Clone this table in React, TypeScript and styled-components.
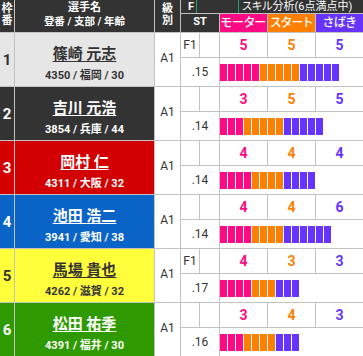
import React from 'react';
import styled, { createGlobalStyle } from 'styled-components';

interface Racer {
    waku: number;
    name: string;
    info: string;
    grade: string;
    flying: string;
    st: string;
    motor: number;
    start: number;
    sabaki: number;
}

const racers: Racer[] = [
    { waku: 1, name: '篠崎 元志', info: '4350 / 福岡 / 30', grade: 'A1', flying: 'F1', st: '.15', motor: 5, start: 5, sabaki: 5 },
    { waku: 2, name: '吉川 元浩', info: '3854 / 兵庫 / 44', grade: 'A1', flying: '', st: '.14', motor: 3, start: 5, sabaki: 5 },
    { waku: 3, name: '岡村 仁', info: '4311 / 大阪 / 32', grade: 'A1', flying: '', st: '.14', motor: 4, start: 4, sabaki: 4 },
    { waku: 4, name: '池田 浩二', info: '3941 / 愛知 / 38', grade: 'A1', flying: '', st: '.14', motor: 4, start: 4, sabaki: 6 },
    { waku: 5, name: '馬場 貴也', info: '4262 / 滋賀 / 32', grade: 'A1', flying: 'F1', st: '.17', motor: 4, start: 3, sabaki: 3 },
    { waku: 6, name: '松田 祐季', info: '4391 / 福井 / 30', grade: 'A1', flying: '', st: '.16', motor: 3, start: 4, sabaki: 3 },
];

const wakuColors: Record<number, { bg: string; fg: string }> = {
    1: { bg: '#e6e6e6', fg: '#333333' },
    2: { bg: '#333333', fg: '#ffffff' },
    3: { bg: '#d20000', fg: '#ffffff' },
    4: { bg: '#0a64c8', fg: '#ffffff' },
    5: { bg: '#ffff3c', fg: '#333333' },
    6: { bg: '#2f9a00', fg: '#ffffff' },
};

const MOTOR = '#ff0a84';
const START = '#ff8000';
const SABAKI = '#6633ff';

const GlobalStyle = createGlobalStyle`
    html, body {
        margin: 0;
        padding: 0;
        overflow: hidden;
        background: #ffffff;
    }
    body {
        font-family: Roboto, "Noto Sans CJK JP", sans-serif;
        color: #333333;
    }
`;

const Table = styled.div`
    display: grid;
    grid-template-columns: 14px 139px 25px 18px 19px 47px 47px 47px;
    grid-template-rows: 13px 18px repeat(6, 24px 28px);
    gap: 1px;
    background: #c2c2c2;
    width: 363px;
`;

const HeadCell = styled.div<{ $rows?: number; $cols?: number; $bg?: string }>`
    grid-row: span ${p => p.$rows || 1};
    grid-column: span ${p => p.$cols || 1};
    background: ${p => p.$bg || '#333333'};
    color: #ffffff;
    font-weight: bold;
    font-size: 11px;
    line-height: 12px;
    display: flex;
    flex-direction: column;
    align-items: center;
    justify-content: center;
    text-align: center;
    padding-bottom: 2px;
    box-sizing: border-box;
`;

const HeadSub = styled.span`
    margin-top: 2px;
    font-size: 10.5px;
`;

const TopBand = styled.div`
    grid-column: span 5;
    background: #333333;
    color: #ffffff;
    display: flex;
    align-items: stretch;
    padding-left: 7px;
    font-size: 11px;
    line-height: 13px;
`;

const FLabel = styled.span`
    font-weight: bold;
    font-size: 11px;
`;

const Tick = styled.span`
    width: 1px;
    background: #23a07a;
    margin-left: 2px;
`;

const TickGap = styled.span`
    width: 39px;
`;

const BandTitle = styled.span`
    margin-left: 3px;
    font-size: 11px;
    font-feature-settings: 'palt';
    white-space: nowrap;
`;

const SkillHead = styled(HeadCell)`
    font-size: 12px;
    font-weight: 500;
    font-feature-settings: 'palt';
    padding-bottom: 0;
`;

const Waku = styled.div<{ $bg: string; $fg: string }>`
    grid-row: span 2;
    background: ${p => p.$bg};
    color: ${p => p.$fg};
    font-weight: bold;
    font-size: 15px;
    display: flex;
    align-items: center;
    justify-content: center;
`;

const NameCell = styled.div<{ $bg: string; $fg: string }>`
    grid-row: span 2;
    background: ${p => p.$bg};
    color: ${p => p.$fg};
    display: flex;
    flex-direction: column;
    align-items: center;
    padding-top: 12px;
    box-sizing: border-box;
`;

const Name = styled.span`
    font-size: 15px;
    line-height: 18px;
    font-weight: bold;
    text-decoration: underline;
    text-underline-offset: 2px;
    white-space: nowrap;
`;

const Info = styled.span`
    margin-top: 6px;
    font-size: 11px;
    line-height: 14px;
    font-weight: bold;
    white-space: nowrap;
`;

const Grade = styled.div`
    grid-row: span 2;
    background: #ffffff;
    font-size: 12px;
    display: flex;
    align-items: center;
    justify-content: center;
    padding-bottom: 3px;
`;

const Cell = styled.div<{ $cols?: number }>`
    grid-column: span ${p => p.$cols || 1};
    background: #ffffff;
    font-size: 12px;
    display: flex;
    align-items: center;
    justify-content: center;
`;

const Score = styled(Cell)<{ $color: string }>`
    color: ${p => p.$color};
    font-weight: bold;
    font-size: 14px;
`;

const BarCell = styled.div`
    grid-column: span 3;
    background: #ffffff;
    display: flex;
    align-items: center;
`;

const Segment = styled.span<{ $color: string }>`
    width: 7px;
    height: 17px;
    background: ${p => p.$color};
    border-right: 1px solid #ffffff;
`;

const SkillBar: React.FC<{ motor: number; start: number; sabaki: number }> = ({ motor, start, sabaki }) => {
    const segs: string[] = [
        ...Array(motor).fill(MOTOR),
        ...Array(start).fill(START),
        ...Array(sabaki).fill(SABAKI),
    ];
    return (
        <BarCell>
            {segs.map((c, i) => (
                <Segment key={i} $color={c} />
            ))}
        </BarCell>
    );
};

const App: React.FC = () => {
    return (
        <>
            <GlobalStyle />
            <Table>
                <HeadCell $rows={2}>
                    <span>枠</span>
                    <span>番</span>
                </HeadCell>
                <HeadCell $rows={2}>
                    <span>選手名</span>
                    <HeadSub>登番 / 支部 / 年齢</HeadSub>
                </HeadCell>
                <HeadCell $rows={2}>
                    <span>級</span>
                    <span>別</span>
                </HeadCell>
                <TopBand>
                    <FLabel>F</FLabel>
                    <Tick />
                    <TickGap />
                    <Tick />
                    <BandTitle>スキル分析(6点満点中)</BandTitle>
                </TopBand>
                <HeadCell $cols={2}>ST</HeadCell>
                <SkillHead $bg={MOTOR}>モーター</SkillHead>
                <SkillHead $bg={START}>スタート</SkillHead>
                <SkillHead $bg={SABAKI}>さばき</SkillHead>

                {racers.map(r => {
                    const c = wakuColors[r.waku];
                    return (
                        <React.Fragment key={r.waku}>
                            <Waku $bg={c.bg} $fg={c.fg}>{r.waku}</Waku>
                            <NameCell $bg={c.bg} $fg={c.fg}>
                                <Name>{r.name}</Name>
                                <Info>{r.info}</Info>
                            </NameCell>
                            <Grade>{r.grade}</Grade>
                            <Cell>{r.flying}</Cell>
                            <Cell />
                            <Score $color={MOTOR}>{r.motor}</Score>
                            <Score $color={START}>{r.start}</Score>
                            <Score $color={SABAKI}>{r.sabaki}</Score>
                            <Cell $cols={2}>{r.st}</Cell>
                            <SkillBar motor={r.motor} start={r.start} sabaki={r.sabaki} />
                        </React.Fragment>
                    );
                })}
            </Table>
        </>
    );
};

export default App;
